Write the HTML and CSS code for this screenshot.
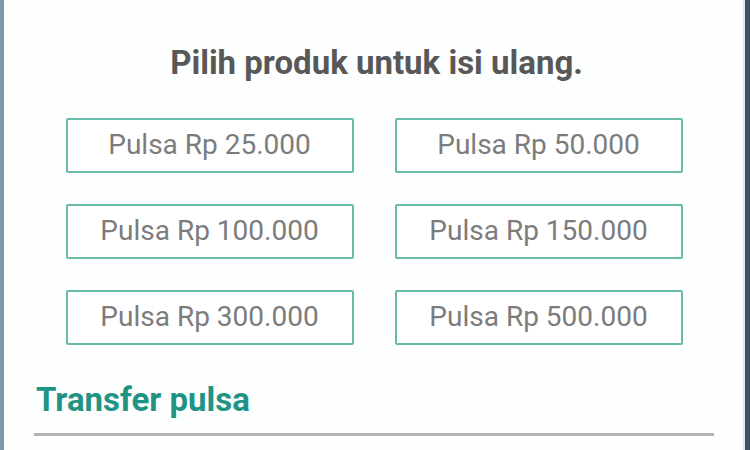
FILE: index.html
```html
<!DOCTYPE html>
<html>
<head>
    <title>Isi Ulang Pulsa</title>
    <link rel="stylesheet" href="styles.css">
</head>
<body>
    <div class="frame">
        <div class="edge-left"></div>
        <div class="screen">
            <h1 class="title">Pilih produk untuk isi ulang.</h1>
            <div class="products">
                <button class="product">Pulsa Rp 25.000</button>
                <button class="product">Pulsa Rp 50.000</button>
                <button class="product">Pulsa Rp 100.000</button>
                <button class="product">Pulsa Rp 150.000</button>
                <button class="product">Pulsa Rp 300.000</button>
                <button class="product">Pulsa Rp 500.000</button>
            </div>
            <h2 class="section">Transfer pulsa</h2>
            <div class="divider"></div>
        </div>
        <div class="edge-right"></div>
    </div>
</body>
</html>
```

FILE: styles.css
```css
body {
    margin: 0;
    padding: 0;
    background-color: #fff;
    font-family: Roboto, "Liberation Sans", sans-serif;
    overflow: hidden;
}
.frame {
    display: flex;
    height: 450px;
}
.edge-left {
    width: 4px;
    background-color: #7f98aa;
}
.edge-right {
    width: 5px;
    border-left: 2px solid #dfe6ec;
    background-color: #3e5366;
}
.screen {
    flex: 1;
    background-color: #fdfefe;
}
.title {
    margin: 43px 0 0;
    padding-left: 6px;
    font-size: 33px;
    line-height: 40px;
    font-weight: bold;
    color: #585858;
    text-align: center;
}
.products {
    display: grid;
    grid-template-columns: 288px 288px;
    grid-auto-rows: 55px;
    column-gap: 41px;
    row-gap: 31px;
    justify-content: center;
    margin-top: 35px;
    padding-left: 1px;
}
.product {
    border: 2px solid #68bba9;
    border-radius: 2px;
    background-color: #fff;
    font-family: Roboto, "Liberation Sans", sans-serif;
    font-size: 28px;
    color: #7c7c7c;
    padding: 0 0 2px;
    cursor: pointer;
}
.section {
    margin: 35px 0 0 32px;
    font-size: 33px;
    line-height: 40px;
    font-weight: bold;
    color: #1f9484;
}
.divider {
    height: 3px;
    margin: 13px 29px 0 30px;
    background-color: #b3b3b3;
}
```
